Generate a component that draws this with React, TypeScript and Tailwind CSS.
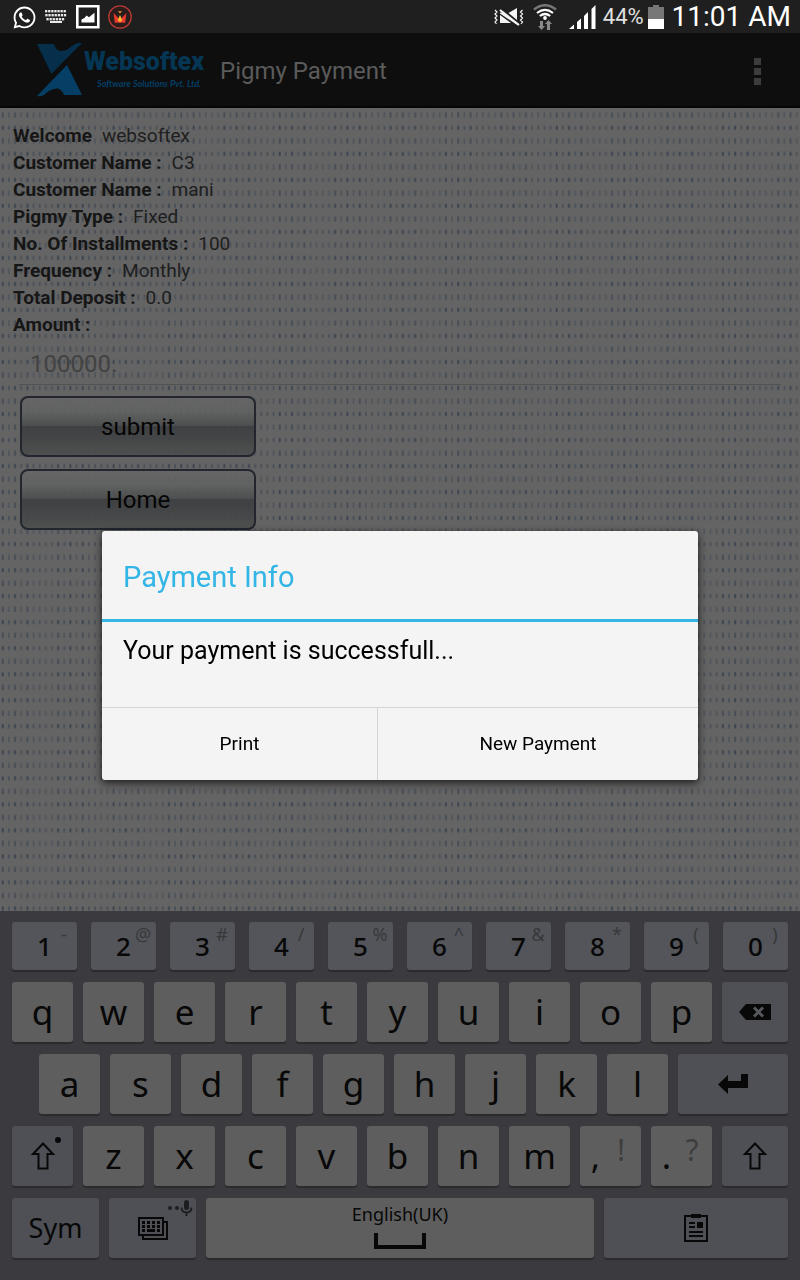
import React from "react";
import { FaWhatsapp } from "react-icons/fa";

const details: [string, string][] = [
  ["Welcome", "websoftex"],
  ["Customer Name :", "C3"],
  ["Customer Name :", "mani"],
  ["Pigmy Type :", "Fixed"],
  ["No. Of Installments :", "100"],
  ["Frequency :", "Monthly"],
  ["Total Deposit :", "0.0"],
];

const digits: [string, string][] = [
  ["1", "-"], ["2", "@"], ["3", "#"], ["4", "/"], ["5", "%"],
  ["6", "^"], ["7", "&"], ["8", "*"], ["9", "("], ["0", ")"],
];

const keyBase =
  "relative flex h-full min-w-0 items-center justify-center rounded-[3px] shadow-[0_2px_1px_#2b2b2e] text-[#080808]";

function LetterKey({ label }: { label: string }) {
  return (
    <button type="button" className={`${keyBase} flex-[61] bg-[#5e5e5e] text-[35px] leading-[60px]`}>
      {label}
    </button>
  );
}

function PunctuationKey({ label, hint }: { label: string; hint: string }) {
  return (
    <button type="button" className={`${keyBase} flex-[61] bg-[#5e5e5e] text-[35px] leading-[60px]`}>
      <span className="pr-[30px]">{label}</span>
      <span className="absolute right-1 top-1 w-8 text-center text-[30px] leading-[40px] text-[#3e3e3e]">{hint}</span>
    </button>
  );
}

function StatusBar() {
  return (
    <header className="flex h-[33px] items-center bg-[#1f1f1f] text-white">
      <div className="flex flex-1 items-center pl-3 pt-px">
        <FaWhatsapp className="h-[25px] w-[25px]" aria-label="WhatsApp" />
        <svg className="ml-2 h-[14px] w-[22px]" viewBox="0 0 22 14" fill="#e8e8e8" aria-label="Keyboard">
          {[0, 4, 8].map((y, r) =>
            Array.from({ length: 7 - (r === 2 ? 1 : 0) }, (_, i) => (
              <rect key={`${y}-${i}`} x={i * 3.1 + (r === 2 ? 1.4 : r * 0.3)} y={y} width="2.3" height="2.4" />
            )),
          )}
          <rect x="5" y="11" width="12" height="2" />
        </svg>
        <svg className="ml-[9px] h-[24px] w-[24px]" viewBox="0 0 24 24" aria-label="Picture">
          <path d="M1.3 1.3h21v21h-21z" fill="none" stroke="#fff" strokeWidth="2.6" />
          <path d="M5.5 17.5v-3l3-1.5 2-2.5 2.5 1.8 3-2.5 2.5-2v9.7z" fill="#fff" />
        </svg>
        <svg className="ml-2 h-[24px] w-[24px]" viewBox="0 0 24 24" aria-label="Crown">
          <circle cx="12" cy="12" r="11.2" fill="#2a1d1c" stroke="#b93a35" strokeWidth="1.3" />
          <path d="M5.6 8l3.2 3.5L12 15l3.2-3.5L18.4 8l-1.2 9.8H6.800z" fill="#e8392c" />
          <path d="M12 10l2.3 5-2.3 2.6L9.700 15z" fill="#f6b52b" />
          <path d="M10.200 6.200h3.600L12 8.600z" fill="#f6a52b" />
        </svg>
      </div>
      <div className="flex items-center pr-[9px]">
        <svg className="h-[20px] w-[32px]" viewBox="0 0 32 20" fill="none" stroke="#f4f4f4" aria-label="Muted">
          <path d="M2 3l2 2-2 2 2 2-2 2 2 2-2 2 1.500 2M29.500 3l-2 2 2 2-2 2 2 2-2 2 2 2-1.500 2" strokeWidth="1.200" />
          <path d="M7 5.500h3l15 11.500v1.500L7 6.500zM7 8l11 8H7zM15.500 6L24 1v12z" fill="#f4f4f4" stroke="none" />
          <path d="M7 3l19 15" strokeWidth="2" />
        </svg>
        <svg className="ml-2 h-[26px] w-[24px]" viewBox="0 0 24 26" fill="none" aria-label="Wi-Fi">
          <path d="M1 5.500Q12-3 23 5.500" stroke="#777" strokeWidth="2.500" />
          <path d="M4 9Q12 2.800 20 9M6.800 12Q12 8 17.200 12" stroke="#fff" strokeWidth="2.200" />
          <circle cx="12" cy="14" r="1.900" fill="#fff" />
          <path d="M7 17h3v5h2l-3.500 4L5 22h2zM14 26v-6h-2l3.500-4 3.500 4h-2v6z" fill="#8a8a8a" />
        </svg>
        <svg className="ml-3 h-[24px] w-[27px]" viewBox="0 0 27 24" fill="#fff" aria-label="Signal">
          <path d="M0 24l5-4.500V24zM8 24v-7l4-3.500V24zM15 24V11l4-4v17zM22.500 24V4L26.500 0v24z" />
        </svg>
        <span className="ml-[7px] pt-px text-[22px] leading-[32px] text-[#e0e0e0]">44%</span>
        <svg className="ml-[4px] h-[24px] w-[16px]" viewBox="0 0 16 24" aria-label="Battery">
          <path d="M5 0h6v2h5v12H0V2h5z" fill="#777" />
          <path d="M0 14h16v10H0z" fill="#fff" />
        </svg>
        <span className="ml-2 text-[28px] leading-[32px]">11:01 AM</span>
      </div>
    </header>
  );
}

function Logo() {
  return (
    <svg className="h-[58px] w-[172px]" viewBox="0 0 172 58" role="img" aria-label="Websoftex Software Solutions Pvt. Ltd.">
      <path d="M1 2h17C21 12 29 10 36 4q5-4 10-3C35 12 26 21 15.500 32z" fill="#052f4b" />
      <path d="M1 54C11 44 21 33 31 23l15 30H28C24 43 16 46 8 53q-4 2-7 1z" fill="#053f66" />
      <text x="48" y="28" fontFamily="Roboto" fontWeight="900" fontSize="25" fill="#053654">Websoftex</text>
      <text x="61" y="45" fontFamily="Lato" fontStyle="italic" fontWeight="700" fontSize="9" fill="#053f66">
        Software Solutions Pvt. Ltd.
      </text>
    </svg>
  );
}

function DotTexture() {
  const strong = [0, 2, 4];
  return (
    <svg className="absolute inset-0 h-full w-full" aria-hidden="true">
      <defs>
        <pattern id="dots" width="55.395" height="26.02" patternUnits="userSpaceOnUse">
          {Array.from({ length: 9 }, (_, i) => (
            <g key={i} fill="#1b2a40" opacity={strong.includes(i) ? 0.6 : 0.36}>
              <rect x={i * 6.155 + 1.8} y="4.200" width="1.900" height="5.500" opacity="0.7" />
              <rect x={i * 6.155 + 1.8} y="17.800" width="1.900" height="4" />
            </g>
          ))}
        </pattern>
      </defs>
      <rect width="100%" height="100%" fill="url(#dots)" />
    </svg>
  );
}

function GlossButton({ children }: { children: React.ReactNode }) {
  return (
    <button
      type="button"
      className="h-[61px] w-[236px] rounded-lg border-2 border-[#23252f] bg-[linear-gradient(to_bottom,#666666e0_0%,#606161e0_25%,#4a4c4ce6_49%,#3c3d3fe6_50%,#414243e6_70%,#4c4d4de6_100%)] pt-px text-2xl text-[#050505]"
    >
      {children}
    </button>
  );
}

function ShiftIcon() {
  return (
    <svg className="h-[30px] w-[26px]" viewBox="0 0 26 30" fill="none" stroke="#080808" strokeWidth="2">
      <path d="M13 2.500L3 13h5.500v14.500h9V13H23z" />
    </svg>
  );
}

function Keyboard() {
  return (
    <section
      aria-label="Keyboard"
      className="flex flex-col gap-3 bg-[#3b3a3f] px-3 pb-[22px] pt-[11px] font-['Noto_Sans',sans-serif]"
    >
      <div className="flex h-12 gap-[14px]">
        {digits.map(([d, hint]) => (
          <button key={d} type="button" className={`${keyBase} flex-1 bg-[#53555a] text-[26px] font-medium leading-[48px]`}>
            {d}
            <span className="absolute right-0 top-0 w-[26px] text-center text-lg font-normal leading-6 text-[#37383b]">
              {hint}
            </span>
          </button>
        ))}
      </div>
      <div className="flex h-[60px] gap-[10px]">
        {"qwertyuiop".split("").map((c) => <LetterKey key={c} label={c} />)}
        <button type="button" aria-label="Backspace" className={`${keyBase} flex-[66] bg-[#4e5056]`}>
          <svg className="h-[16px] w-[32px]" viewBox="0 0 32 16">
            <path d="M0 8L7 0h25v16H7z" fill="#080808" />
            <path d="M15 3.500l9 9M24 3.500l-9 9" stroke="#56585d" strokeWidth="3" />
          </svg>
        </button>
      </div>
      <div className="flex h-[60px] gap-[10px] pl-[27px]">
        {"asdfghjkl".split("").map((c) => <LetterKey key={c} label={c} />)}
        <button type="button" aria-label="Enter" className={`${keyBase} flex-[110] bg-[#4e5056]`}>
          <svg className="h-[20px] w-[30px]" viewBox="0 0 30 20" fill="#080808">
            <path d="M0 10.500L10 1v6h13V0h7v14H10v6z" />
          </svg>
        </button>
      </div>
      <div className="flex h-[60px] gap-[10px]">
        <button type="button" aria-label="Shift" className={`${keyBase} flex-[61] bg-[#4e5056]`}>
          <ShiftIcon />
          <span className="absolute right-3 top-[11px] size-[6px] rounded-full bg-[#080808]" />
        </button>
        {"zxcvbnm".split("").map((c) => <LetterKey key={c} label={c} />)}
        <PunctuationKey label="," hint="!" />
        <PunctuationKey label="." hint="?" />
        <button type="button" aria-label="Right shift" className={`${keyBase} flex-[66] bg-[#4e5056]`}>
          <ShiftIcon />
        </button>
      </div>
      <div className="flex h-[60px] gap-[10px]">
        <button type="button" className={`${keyBase} flex-[87] bg-[#4e5056] text-[27px]`}>Sym</button>
        <button type="button" aria-label="Input options" className={`${keyBase} flex-[87] bg-[#4e5056]`}>
          <svg className="h-[24px] w-[30px]" viewBox="0 0 30 24" fill="none" stroke="#080808" strokeWidth="2">
            <path d="M1 2h24v17H1zM26 6h3v17H5v-3" />
            {[5, 9, 13].map((y) =>
              [4, 9, 14, 19].map((x) => (
                <rect key={`${x}-${y}`} x={x} y={y} width="3" height="3" fill="#080808" stroke="none" />
              )),
            )}
            <path d="M9 14.500h8" strokeWidth="3" />
          </svg>
          <svg className="absolute right-[3px] top-[2px] h-[17px] w-[26px]" viewBox="0 0 26 17" fill="#1d1e20">
            <circle cx="3" cy="8" r="2" />
            <circle cx="10" cy="8" r="2" />
            <rect x="17" y="0" width="5" height="10" rx="2.500" />
            <path d="M14.500 7.500q0 5 5 5t5-5M19.500 12.500V16" fill="none" stroke="#1d1e20" strokeWidth="1.800" />
          </svg>
        </button>
        <button type="button" className={`${keyBase} flex-[388] bg-[#5e5e5e]`}>
          <span className="flex flex-col items-center pb-[6px]">
            <span className="text-lg leading-[26px]">English(UK)</span>
            <svg className="mt-[6px] h-[16px] w-[52px]" viewBox="0 0 52 16" fill="none" stroke="#080808" strokeWidth="4">
              <path d="M2 0v14h48V0" />
            </svg>
          </span>
        </button>
        <button type="button" aria-label="Clipboard" className={`${keyBase} flex-[184] bg-[#4e5056]`}>
          <svg className="h-[28px] w-[24px]" viewBox="0 0 24 28" fill="#080808">
            <path d="M1 2h22v25H1z" fill="none" stroke="#080808" strokeWidth="2" />
            <path d="M7 0h10v4H7zM5 8h6v2H5zM5 12h6v2H5zM13 8h6v6h-6zM5 17h14v2H5zM5 21h14v2H5z" />
          </svg>
        </button>
      </div>
    </section>
  );
}

export default function App() {
  return (
    <div className="flex min-h-screen flex-col bg-[#646464] font-[Roboto,sans-serif]">
      <StatusBar />
      <div className="flex h-[75px] items-center border-b-2 border-[#050505] bg-[#0e0e0e] pl-9 pr-[36px] pt-[3px]">
        <Logo />
        <h1 className="ml-3 flex-1 text-2xl text-[#5b5b5b]">Pigmy Payment</h1>
        <button type="button" aria-label="More options" className="flex flex-col gap-[3px] p-[3px]">
          <span className="size-[7px] bg-[#3c3c3c]" />
          <span className="size-[7px] bg-[#3c3c3c]" />
          <span className="size-[7px] bg-[#3c3c3c]" />
        </button>
      </div>

      <main className="relative flex-1 overflow-hidden">
        <DotTexture />
        <div className="relative pt-[14px]">
          <dl className="px-[13px] text-[19px] leading-[27px] text-[#161616]">
            {details.map(([name, value], i) => (
              <div key={i} className="flex gap-[10px]">
                <dt className="font-bold">{name}</dt>
                <dd className="text-[#1e1e1e]">{value}</dd>
              </div>
            ))}
          </dl>
          <label htmlFor="amount" className="block px-[13px] text-[19px] font-bold leading-[27px] text-[#161616]">
            Amount :
          </label>
          <div className="px-[19px]">
            <input
              id="amount"
              type="text"
              defaultValue="100000."
              className="mt-2 block h-[39px] w-full border-b border-[#505354] bg-transparent px-[11px] pb-[2px] text-2xl text-[#424242] outline-none"
            />
          </div>
          <div className="flex flex-col items-start gap-3 px-5 pt-[11px]">
            <GlossButton>submit</GlossButton>
            <GlossButton>Home</GlossButton>
          </div>
        </div>
      </main>

      <Keyboard />

      <div className="fixed inset-0 flex items-center justify-center px-[102px] pt-[31px]">
        <div
          role="dialog"
          aria-labelledby="dialog-title"
          className="w-full max-w-[596px] overflow-hidden rounded-[3px] bg-[#f4f4f4] shadow-[0_3px_8px_rgba(0,0,0,0.7)]"
        >
          <h2 id="dialog-title" className="border-b-[3px] border-[#33b5e5] px-[21px] pb-[22px] pt-[26px] text-[29px] leading-[40px] text-[#33b5e5]">
            Payment Info
          </h2>
          <p className="px-[21px] pb-[40px] pt-[13px] text-[25px] leading-8 text-black">Your payment is successfull...</p>
          <div className="flex border-t border-[#d6d6d6] text-[19px] leading-6 text-black">
            <button type="button" className="h-[72px] flex-[275] border-r border-[#d6d6d6]">Print</button>
            <button type="button" className="h-[72px] flex-[320]">New Payment</button>
          </div>
        </div>
      </div>
    </div>
  );
}
